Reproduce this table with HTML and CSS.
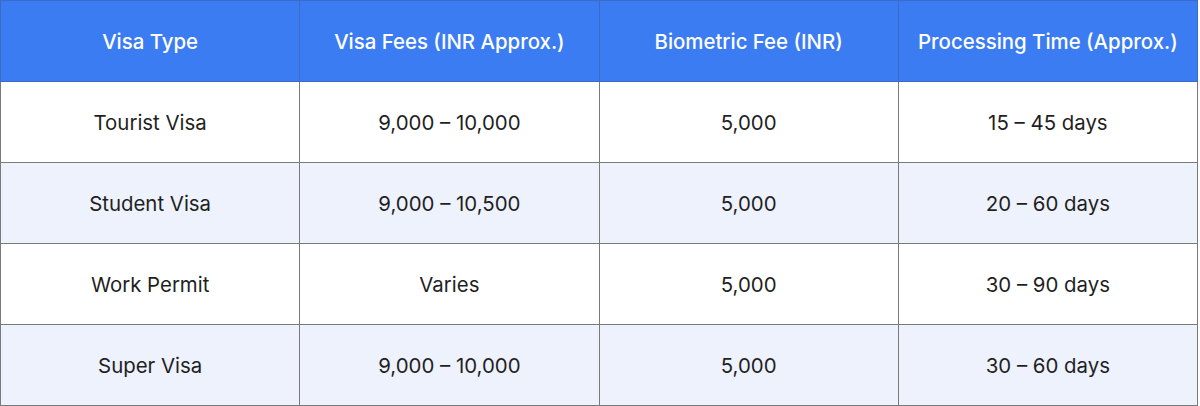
FILE: index.html
```html
<!DOCTYPE html>
<html>
<head>
<meta charset="utf-8">
<link rel="stylesheet" href="styles.css">
</head>
<body>
<table class="fees">
  <thead>
    <tr>
      <th>Visa Type</th>
      <th>Visa Fees (INR Approx.)</th>
      <th>Biometric Fee (INR)</th>
      <th>Processing Time (Approx.)</th>
    </tr>
  </thead>
  <tbody>
    <tr><td>Tourist Visa</td><td>9,000 – 10,000</td><td>5,000</td><td>15 – 45 days</td></tr>
    <tr class="alt"><td>Student Visa</td><td>9,000 – 10,500</td><td>5,000</td><td>20 – 60 days</td></tr>
    <tr><td>Work Permit</td><td>Varies</td><td>5,000</td><td>30 – 90 days</td></tr>
    <tr class="alt"><td>Super Visa</td><td>9,000 – 10,000</td><td>5,000</td><td>30 – 60 days</td></tr>
  </tbody>
</table>
</body>
</html>
```
FILE: styles.css
```css
html, body {
  margin: 0;
  padding: 0;
  background: #ffffff;
}
.fees {
  border-collapse: collapse;
  width: 1198px;
  table-layout: fixed;
  font-family: Inter, "Liberation Sans", sans-serif;
  font-size: 20.4px;
  color: #1f1f1f;
}
.fees th, .fees td {
  border: 1px solid #7a7a7a;
  height: 80px;
  padding: 0;
  text-align: center;
  vertical-align: middle;
}
.fees th {
  background: #3c7cf2;
  color: #ffffff;
  font-weight: 500;
  border-color: #3a6cc8;
}
.fees th + th {
  border-left-color: #4a5f8a;
}
.fees tr.alt td {
  background: #eef2fd;
}
```
